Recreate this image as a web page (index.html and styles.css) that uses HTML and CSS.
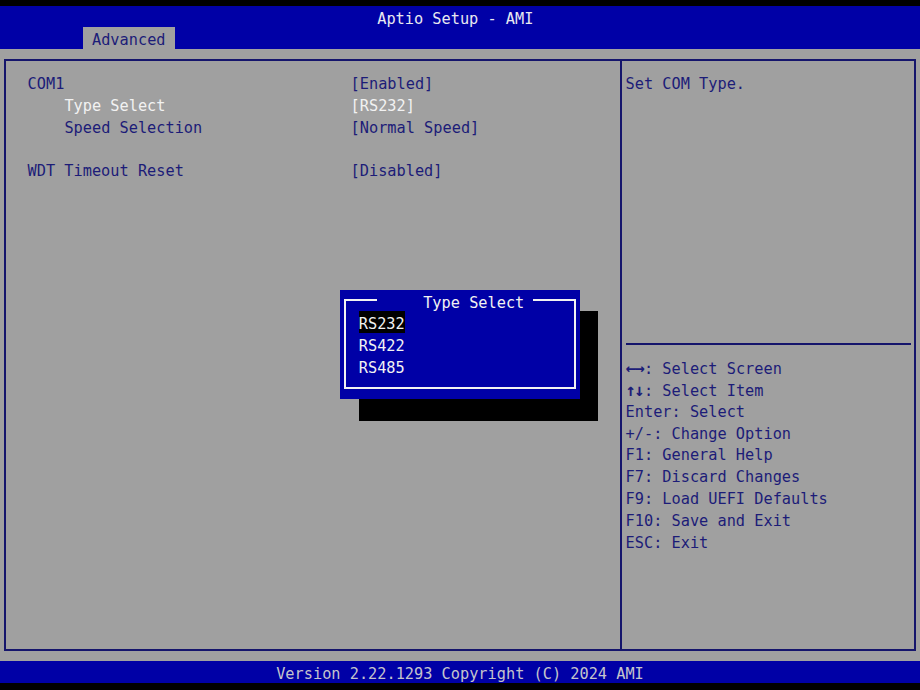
FILE: index.html
```html
<!DOCTYPE html>
<html lang="en">
<head>
    <meta charset="UTF-8">
    <meta name="viewport" content="width=device-width, initial-scale=1.0">
    <title>Aptio Setup - AMI</title>
    <link rel="stylesheet" href="styles.css">
</head>
<body>
    <div class="screen">
        <header class="topbar">
            <div class="title">Aptio Setup - AMI</div>
            <nav class="tabs"><span class="tab">Advanced</span></nav>
        </header>

        <main class="workarea">
            <div class="frame">
                <section class="settings">
                    <div class="setting"><span class="label">COM1</span><span class="value">[Enabled]</span></div>
                    <div class="setting sub selected"><span class="label">Type Select</span><span class="value">[RS232]</span></div>
                    <div class="setting sub"><span class="label">Speed Selection</span><span class="value">[Normal Speed]</span></div>
                    <div class="setting"></div>
                    <div class="setting"><span class="label">WDT Timeout Reset</span><span class="value">[Disabled]</span></div>
                </section>
                <aside class="help">
                    <div class="help-text">Set COM Type.</div>
                    <div class="help-rule"></div>
                    <ul class="keys">
                        <li><b class="arrows">←→</b>: Select Screen</li>
                        <li><b class="arrows">↑↓</b>: Select Item</li>
                        <li>Enter: Select</li>
                        <li>+/-: Change Option</li>
                        <li>F1: General Help</li>
                        <li>F7: Discard Changes</li>
                        <li>F9: Load UEFI Defaults</li>
                        <li>F10: Save and Exit</li>
                        <li>ESC: Exit</li>
                    </ul>
                </aside>
            </div>
        </main>

        <footer class="status">Version 2.22.1293 Copyright (C) 2024 AMI</footer>

        <div class="popup-shadow"></div>
        <div class="popup">
            <fieldset class="popup-frame">
                <legend>Type Select</legend>
                <div class="option"><span class="active">RS232</span></div>
                <div class="option">RS422</div>
                <div class="option">RS485</div>
            </fieldset>
        </div>
    </div>
</body>
</html>
```

FILE: styles.css
```css
:root {
    --cw: 9.2px;
    --rh: 21.85px;
    --blue: #0000a6;
    --gray: #a0a0a0;
    --navy: #1c1c78;
    --line: #15156c;
    --white: #f2f2f2;
}
* {
    box-sizing: border-box;
}
body {
    margin: 0;
    background: #000;
    font-family: "DejaVu Sans Mono", "Liberation Mono", monospace;
    font-size: 15.28px;
    /* glyphs sit a little low in each text cell */
    line-height: calc(var(--rh) + 5px);
    color: var(--navy);
}
.screen {
    position: relative;
    margin-top: 5.5px;
    height: calc(31 * var(--rh));
    display: flex;
    flex-direction: column;
    background: var(--gray);
    white-space: nowrap;
}
.topbar {
    background: var(--blue);
    height: calc(2 * var(--rh));
}
.title {
    height: var(--rh);
    padding-left: calc(41 * var(--cw));
    color: #e8e8f0;
}
.tabs {
    display: flex;
    height: var(--rh);
    padding-left: calc(9 * var(--cw));
}
.tab {
    height: var(--rh);
    padding: 0 var(--cw);
    background: var(--gray);
    color: var(--navy);
}
.workarea {
    flex: 1;
    padding: calc(var(--rh) / 2 - 1px) calc(var(--cw) / 2 - 1px);
}
.frame {
    height: 100%;
    border: 2px solid var(--line);
    display: grid;
    grid-template-columns: calc(67 * var(--cw) - 2px) 1fr;
}
.settings {
    padding: calc(var(--rh) / 2 - 1px) 0 0 calc(2.5 * var(--cw) - 1px);
}
.setting {
    display: grid;
    grid-template-columns: calc(35 * var(--cw) + 1px) auto;
    height: var(--rh);
}
.setting.sub .label {
    padding-left: calc(4 * var(--cw));
}
.setting.selected {
    color: var(--white);
}
.help {
    border-left: 2px solid var(--line);
    padding: calc(var(--rh) / 2 - 1px) 0 0 calc(var(--cw) / 2 - 1px);
}
.help-text {
    height: calc(12 * var(--rh));
}
.help-rule {
    margin: calc(var(--rh) / 2 - 1px) calc(var(--cw) / 2 - 1px) 0 0;
    border-top: 2px solid var(--line);
}
.keys {
    list-style: none;
    margin: calc(var(--rh) / 2 - 1px) 0 0;
    padding: 0;
}
.keys li {
    height: var(--rh);
}
.arrows {
    display: inline-block;
    width: calc(2 * var(--cw));
    font-size: 17px;
    letter-spacing: -1.5px;
}
.status {
    height: var(--rh);
    background: var(--blue);
    color: #c4c4cc;
    text-align: center;
}
.popup-shadow {
    position: absolute;
    left: calc(39 * var(--cw));
    top: calc(14 * var(--rh));
    width: calc(26 * var(--cw));
    height: calc(5 * var(--rh));
    background: #000;
}
.popup {
    position: absolute;
    left: calc(37 * var(--cw));
    top: calc(13 * var(--rh));
    width: calc(26 * var(--cw));
    height: calc(5 * var(--rh));
    padding: 0 calc(var(--cw) / 2 - 1px);
    background: var(--blue);
    color: var(--white);
}
.popup-frame {
    margin: 0;
    min-inline-size: 0;
    width: 100%;
    border: 2px solid var(--white);
    padding: 0 0 calc(var(--rh) / 2 - 1px) calc(1.5 * var(--cw) - 1px);
}
.popup-frame legend {
    margin-left: calc(2 * var(--cw));
    padding: 0 var(--cw) 0 calc(5 * var(--cw));
    height: var(--rh);
}
.option {
    height: var(--rh);
}
.option .active {
    display: block;
    width: calc(5 * var(--cw));
    height: var(--rh);
    background: #000;
}
```
